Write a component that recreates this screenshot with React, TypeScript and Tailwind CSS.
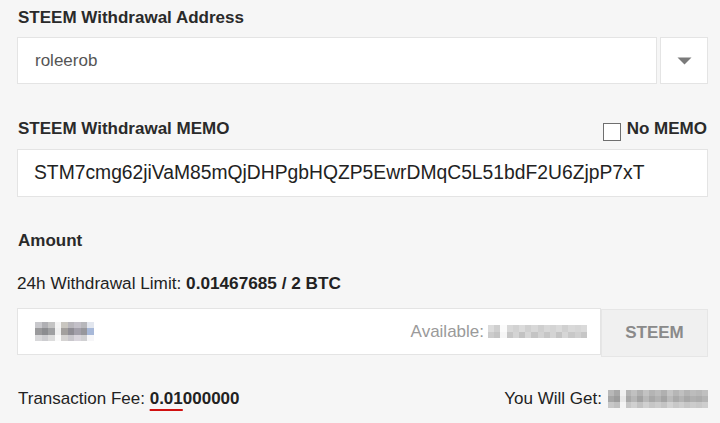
import React from "react";

const font = { fontFamily: '"Liberation Sans", Arial, sans-serif' };

function Mosaic({ cells, size = 6 }: { cells: string[][]; size?: number }) {
  return (
    <span className="inline-flex flex-col align-middle">
      {cells.map((row, i) => (
        <span key={i} className="flex">
          {row.map((c, j) => (
            <span key={j} style={{ width: size, height: size, background: c }} />
          ))}
        </span>
      ))}
    </span>
  );
}

const amountCells = [
  ["#c8c8cc", "#b0b0b4", "#c4c4c4", "#f4f4f4", "#c9c6c0", "#b8b6bb", "#c3c0c8", "#b7b7bb", "#e2e6ee"],
  ["#9a9a9c", "#8c8d90", "#9fa0a2", "#f0f0f0", "#a3a09e", "#8f8d94", "#a3a0aa", "#97979c", "#a7b8d8"],
  ["#d8d8da", "#cdcdd0", "#dcdcdc", "#fafafa", "#d5d3d2", "#c9c7cc", "#d9d5dc", "#d0d0d2", "#f6f6f8"],
];
const availCells = [
  ["#dcdcdc", "#cfcfcf", "#fbfbfb", "#d8d8d8", "#d2d2d2", "#dbdbdb", "#d0d0d0", "#d8d8d8", "#cfcfcf", "#d8d8d8", "#d4d4d4", "#dadada", "#d0d0d0", "#d9d9d9", "#d6d6d6", "#dadada"],
  ["#cccccc", "#c4c4c4", "#f6f6f6", "#c6c6c6", "#d4d4d4", "#c2c2c2", "#d6d6d6", "#c4c4c4", "#d2d2d2", "#c6c6c6", "#d4d4d4", "#c4c4c4", "#d6d6d6", "#c8c8c8", "#d0d0d0", "#c6c6c6"],
];
const getCells = [
  ["#b8b8b8", "#a8a8a8", "#f0f0f0", "#b4b4b4", "#c0c0c0", "#b0b0b0", "#c2c2c2", "#b4b4b4", "#bcbcbc", "#b0b0b0", "#c4c4c4", "#b6b6b6", "#c0c0c0", "#b4b4b4", "#bcbcbc", "#b8b8b8", "#c0c0c0"],
  ["#a6a6a6", "#9c9c9c", "#e8e8e8", "#a8a8a8", "#b6b6b6", "#a2a2a2", "#b8b8b8", "#a8a8a8", "#b2b2b2", "#a4a4a4", "#bababa", "#aaaaaa", "#b4b4b4", "#a8a8a8", "#b0b0b0", "#acacac", "#b4b4b4"],
  ["#c8c8c8", "#c0c0c0", "#f4f4f4", "#c6c6c6", "#d0d0d0", "#c2c2c2", "#d0d0d0", "#c6c6c6", "#cccccc", "#c4c4c4", "#d2d2d2", "#c8c8c8", "#cecece", "#c6c6c6", "#cccccc", "#c8c8c8", "#cecece"],
];

export default function App() {
  return (
    <div className="w-[720px] h-[423px] bg-[#f6f6f6] text-[#333] pl-[17px] pr-[12px] pt-[8px] overflow-hidden" style={font}>
      {/* Address */}
      <div className="h-[20px] leading-[20px] text-[17px] font-bold pl-[1px] text-[#2a2a2a]">STEEM Withdrawal Address</div>
      <div className="mt-[9px] flex gap-[3px] h-[47px]">
        <div className="flex-1 bg-white border border-[#e4e4e4] flex items-center pl-[17px] text-[17px] text-[#555]">roleerob</div>
        <div className="w-[48px] bg-white border border-[#e4e4e4] flex items-center justify-center">
          <svg width="15" height="8" viewBox="0 0 15 8">
            <path d="M0.5 0.5 L14.5 0.5 L7.5 7.5 Z" fill="#7a7a7a" />
          </svg>
        </div>
      </div>

      {/* Memo */}
      <div className="mt-[35px] h-[20px] flex items-center justify-between">
        <div className="leading-[20px] text-[17px] font-bold pl-[1px] text-[#2a2a2a]">STEEM Withdrawal MEMO</div>
        <div className="flex items-center gap-[6px] pr-[1px]">
          <span className="w-[18px] h-[18px] border-[1.5px] border-[#6f6f6f] bg-white mt-[6px]" />
          <span className="text-[17px] font-bold text-[#2a2a2a]">No MEMO</span>
        </div>
      </div>
      <div className="mt-[10px] h-[48px] bg-white border border-[#e4e4e4] flex items-center pl-[16px] text-[19.3px] text-[#222]">
        STM7cmg62jiVaM85mQjDHPgbHQZP5EwrDMqC5L51bdF2U6ZjpP7xT
      </div>

      {/* Amount */}
      <div className="mt-[34px] h-[20px] leading-[20px] text-[17px] font-bold pl-[1px] text-[#2a2a2a]">Amount</div>
      <div className="mt-[22px] h-[20px] leading-[20px] text-[17.2px] text-[#222]">
        24h Withdrawal Limit: <span className="font-bold">0.01467685 / 2 BTC</span>
      </div>
      <div className="mt-[15px] flex items-start h-[49px]">
        <div className="w-[584px] h-[47px] bg-white border border-[#e4e4e4] flex items-center justify-between pl-[17px] pr-[13px]">
          <Mosaic cells={amountCells} size={6.5} />
          <div className="flex items-center gap-[4px] text-[17px] text-[#9a9a9a]">
            <span>Available:</span>
            <Mosaic cells={availCells} size={6.2} />
          </div>
        </div>
        <div className="mt-[1px] w-[107px] h-[48px] bg-[#f0f0f0] border border-[#e6e6e6] flex items-center justify-center text-[17px] font-bold text-[#8a8a8a]">
          STEEM
        </div>
      </div>

      {/* Fee */}
      <div className="mt-[32px] h-[20px] flex items-center justify-between text-[17px] text-[#222]">
        <div className="pl-[1px]">
          Transaction Fee:{" "}
          <span className="font-bold">
            <span className="underline decoration-[#d01010] decoration-2 underline-offset-[5px]">0.01</span>000000
          </span>
        </div>
        <div className="flex items-center gap-[6px]">
          <span>You Will Get:</span>
          <Mosaic cells={getCells} size={5.9} />
        </div>
      </div>
    </div>
  );
}
